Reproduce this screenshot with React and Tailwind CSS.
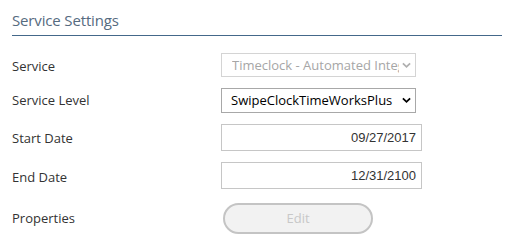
import React from 'react';

const Chevron = ({ className }) => (
  <svg viewBox="0 0 10 7" className={className} fill="none" stroke="currentColor" strokeWidth="2">
    <path d="M1 1.2 L5 5 L9 1.2" />
  </svg>
);

function Row({ label, children, className = '', labelClass = '' }) {
  return (
    <div className={`flex items-center ${className}`}>
      <div className={`w-[209px] shrink-0 text-[13px] text-[#333] ${labelClass}`}>{label}</div>
      {children}
    </div>
  );
}

export default function App() {
  return (
    <div className="w-[516px] h-[251px] bg-white px-3 font-['Open_Sans',sans-serif]">
      <div className="h-[36px] pt-[9px] border-b border-[#44688a] w-[490px]">
        <h2 className="text-[15px] leading-[22px] tracking-[-0.15px] text-[#566b7f]">Service Settings</h2>
      </div>

      <Row label="Service" className="mt-[17px] h-[24px]" labelClass="pt-[4px]">
        <div className="w-[195px] h-[24px] border border-[#d4d4d4] flex items-center pl-[10px] pr-[4px] pt-[1px] text-[13px] text-[#a6a6a6] overflow-hidden">
          <span className="flex-1 whitespace-nowrap overflow-hidden">Timeclock - Automated Integration</span>
          <Chevron className="w-[9px] h-[7px] ml-[3px] text-[#b0b0b0] shrink-0" />
        </div>
      </Row>

      <Row label="Service Level" className="mt-[11px] h-[25px]" labelClass="pt-[1px]">
        <div className="w-[195px] h-[25px] border border-[#a8a8a8] flex items-center pl-[9px] pr-[4px] text-[13px] text-black overflow-hidden">
          <span className="flex-1 whitespace-nowrap overflow-hidden">SwipeClockTimeWorksPlus</span>
          <Chevron className="w-[9px] h-[7px] ml-[3px] text-black shrink-0" />
        </div>
      </Row>

      <Row label="Start Date" className="mt-[11px] h-[27px]" labelClass="pt-[3px]">
        <div className="w-[201px] h-[27px] border border-[#c6c6c6] flex items-center justify-end pr-[5px] text-[13px] text-[#333] font-['Liberation_Sans',sans-serif]">
          09/27/2017
        </div>
      </Row>

      <Row label="End Date" className="mt-[11px] h-[27px]" labelClass="pt-[4px]">
        <div className="w-[201px] h-[27px] border border-[#c6c6c6] flex items-center justify-end pr-[5px] text-[13px] text-[#333] font-['Liberation_Sans',sans-serif]">
          12/31/2100
        </div>
      </Row>

      <Row label="Properties" className="mt-[14px] h-[31px]">
        <button className="ml-[2px] w-[150px] h-[31px] rounded-full border-2 border-[#c4c4c4] bg-[#f2f2f2] text-[13px] text-[#c8c8c8]">
          Edit
        </button>
      </Row>
    </div>
  );
}
